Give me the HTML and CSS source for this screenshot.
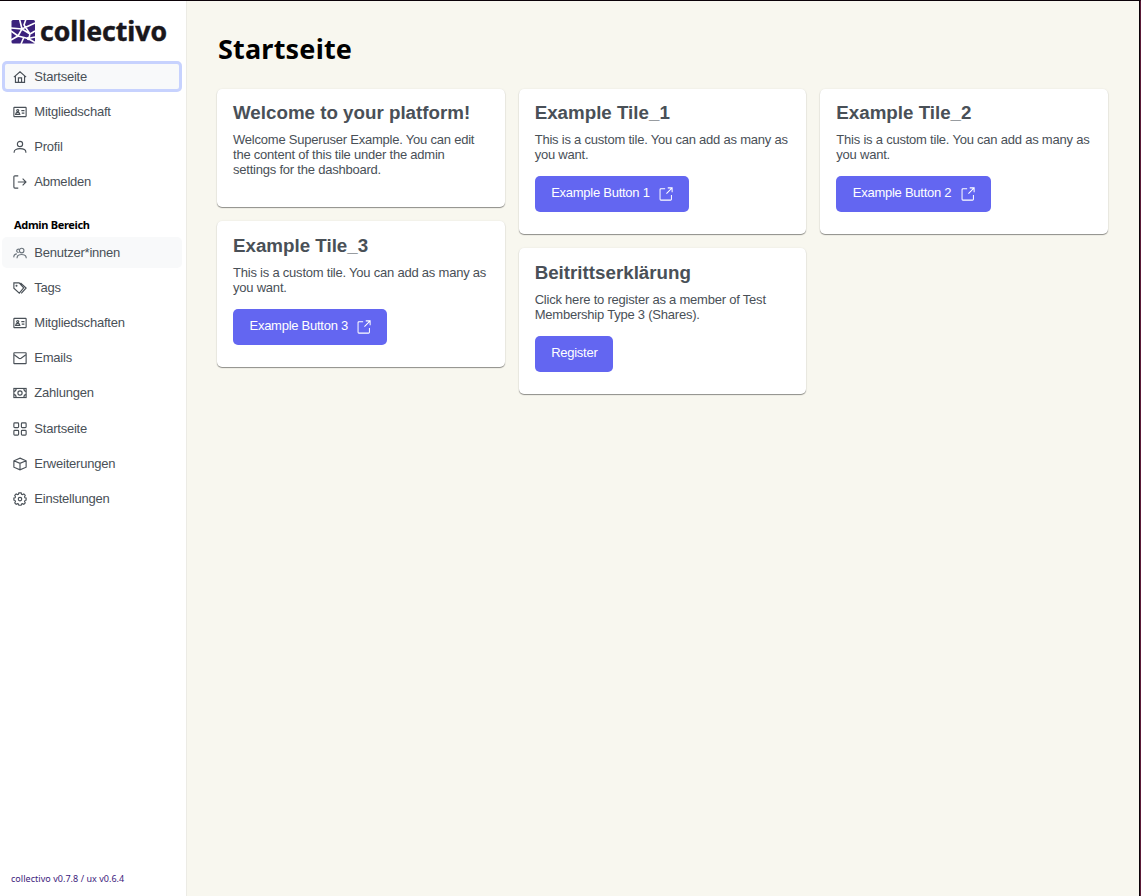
FILE: index.html
```html
<!DOCTYPE html>
<html lang="de">
<head>
<meta charset="utf-8">
<title>collectivo</title>
<link rel="stylesheet" href="styles.css">
</head>
<body>
<svg class="sprite" width="0" height="0">
  <symbol id="home" viewBox="0 0 16 16"><path d="M1 8.2 8 2l7 6.2M2.8 7v7.2h10.4V7M6.2 14V9h3.6v5"/></symbol>
  <symbol id="card" viewBox="0 0 16 16"><rect x="1" y="2.7" width="14" height="10.6" rx=".6"/><circle cx="5.4" cy="6.4" r="1.2"/><path d="M3 10.7c.3-3 4.5-3 4.8 0zM9.5 6.5h3.6M10 9.3h3"/></symbol>
  <symbol id="user" viewBox="0 0 16 16"><circle cx="8" cy="4.6" r="3"/><path d="M1.3 14.6v-.8c0-5.2 13.4-5.2 13.4 0v.8"/></symbol>
  <symbol id="logout" viewBox="0 0 16 16"><path d="M6 1H2.2Q1 1 1 2.2v11.6Q1 15 2.2 15H6M5.5 8h9.3M11 4.2 14.8 8 11 11.8"/></symbol>
  <symbol id="users" viewBox="0 0 16 16"><circle cx="9.9" cy="5.2" r="2.6"/><path d="M4.6 14c.2-5.8 10.2-5.8 10.6 0M6.5 7.4a1.9 1.9 0 1 1 .8-3.4M.8 13c.2-3 1.6-4 3.6-4"/></symbol>
  <symbol id="tags" viewBox="0 0 16 16"><path d="M1 2.2h6l5.2 5.6-5 6L1 8.2zM8.6 2.2 15 8l-5.6 6.2"/><circle cx="4" cy="5.3" r=".5"/></symbol>
  <symbol id="mail" viewBox="0 0 16 16"><rect x="1" y="2" width="14" height="12.4" rx=".5"/><path d="m1.3 4.3 5.5 4q1.2.8 2.4 0l5.5-4"/></symbol>
  <symbol id="cash" viewBox="0 0 16 16"><rect x="1" y="2.8" width="14" height="10.4"/><circle cx="8" cy="8" r="2.4"/><path d="M1 6.1c2 0 2.6-1.3 2.6-3.3M15 6.1c-2 0-2.6-1.3-2.6-3.3M1 9.9c2 0 2.6 1.3 2.6 3.3M15 9.9c-2 0-2.6 1.3-2.6 3.3"/></symbol>
  <symbol id="grid" viewBox="0 0 16 16"><rect x="1" y="1" width="5.4" height="5.4" rx="1"/><rect x="9.6" y="1" width="5.4" height="5.4" rx="1"/><rect x="1" y="9.6" width="5.4" height="5.4" rx="1"/><rect x="9.6" y="9.6" width="5.4" height="5.4" rx="1"/></symbol>
  <symbol id="cube" viewBox="0 0 16 16"><path d="m8 1.3 7 3v7.4l-7 3-7-3V4.3zM1 4.3l7 3 7-3M8 7.3v7.4"/></symbol>
  <symbol id="gear" viewBox="0 0 16 16"><path d="m6.7 1 2.6 0 .5 1.6 1 .4 1.6-.8 1.6 1.7-.8 1.6.4 1 1.4.4v2.4l-1.4.5-.4 1 .8 1.6-1.6 1.7-1.6-.8-1 .4-.5 1.4H6.7l-.5-1.4-1-.4-1.6.8L2 12.4l.8-1.6-.4-1L1 9.3V6.9l1.4-.4.4-1L2 3.9l1.6-1.7 1.6.8 1-.4z"/><circle cx="8" cy="8.1" r="2"/></symbol>
  <symbol id="external" viewBox="0 0 16 16"><path d="M7 2H2.2Q1.2 2 1.2 3v11q0 1 1 1h11q1 0 1-1V9M10 1h5v5M15 1 8.5 7.5"/></symbol>
</svg>
<div class="app">
  <aside class="sidebar">
    <svg class="logo" width="158" height="44" viewBox="0 -10 158 44">
      <rect x=".5" y="1" width="23.5" height="23.5" rx="1.5" fill="#3b217c"/>
      <path d="M0 9 11 10 24 4M8.5 0 11 10 7 17 0 12M11 10l8 5 5-3M15 0l-2 6 6 9-1 4M7 17l10 2.5 7 4M7 17l-7 4M13 18l-3 7M24 18l-7 1.5" fill="none" stroke="#fff" stroke-width="1.6"/>
      <circle cx="17.5" cy="19.5" r="1.8" fill="#fff"/>
      <circle cx="11" cy="10" r="1.4" fill="#fff"/>
      <text class="logo-text" x="29" y="21.8" textLength="127" lengthAdjust="spacingAndGlyphs">collectivo</text>
    </svg>
    <nav class="menu">
      <a class="item focused"><svg><use href="#home"/></svg><span>Startseite</span></a>
      <a class="item"><svg><use href="#card"/></svg><span>Mitgliedschaft</span></a>
      <a class="item"><svg><use href="#user"/></svg><span>Profil</span></a>
      <a class="item"><svg><use href="#logout"/></svg><span>Abmelden</span></a>
    </nav>
    <div class="section">Admin Bereich</div>
    <nav class="menu">
      <a class="item hovered"><svg class="light"><use href="#users"/></svg><span>Benutzer*innen</span></a>
      <a class="item"><svg><use href="#tags"/></svg><span>Tags</span></a>
      <a class="item"><svg><use href="#card"/></svg><span>Mitgliedschaften</span></a>
      <a class="item"><svg><use href="#mail"/></svg><span>Emails</span></a>
      <a class="item"><svg><use href="#cash"/></svg><span>Zahlungen</span></a>
      <a class="item"><svg><use href="#grid"/></svg><span>Startseite</span></a>
      <a class="item"><svg><use href="#cube"/></svg><span>Erweiterungen</span></a>
      <a class="item"><svg><use href="#gear"/></svg><span>Einstellungen</span></a>
    </nav>
    <div class="version">collectivo v0.7.8 / ux v0.6.4</div>
  </aside>
  <main class="content">
    <h1>Startseite</h1>
    <div class="tiles">
      <div class="column">
        <section class="tile short"><h2>Welcome to your platform!</h2><p>Welcome Superuser Example. You can edit the content of this tile under the admin settings for the dashboard.</p></section>
        <section class="tile"><h2>Example Tile_3</h2><p>This is a custom tile. You can add as many as you want.</p><a class="button">Example Button 3<svg><use href="#external"/></svg></a></section>
      </div>
      <div class="column">
        <section class="tile"><h2>Example Tile_1</h2><p>This is a custom tile. You can add as many as you want.</p><a class="button">Example Button 1<svg><use href="#external"/></svg></a></section>
        <section class="tile"><h2>Beitrittserklärung</h2><p>Click here to register as a member of Test Membership Type 3 (Shares).</p><a class="button">Register</a></section>
      </div>
      <div class="column">
        <section class="tile"><h2>Example Tile_2</h2><p>This is a custom tile. You can add as many as you want.</p><a class="button">Example Button 2<svg><use href="#external"/></svg></a></section>
      </div>
    </div>
  </main>
</div>
</body>
</html>
```
FILE: styles.css
```css
* { box-sizing: border-box; }
body { margin: 0; font-family: "Liberation Sans", Arial, sans-serif; font-size: 13px; letter-spacing: -.22px; color: #495057; }
.sprite { display: block; }
.app { display: flex; height: 896px; border-top: 1px solid #0b0208; border-right: 1px solid #5c1b38; box-shadow: inset -1px 0 #0b0208; background: #f8f7ef; }
svg { fill: none; stroke: currentColor; stroke-width: 1.3; }
.sidebar { width: 187px; flex: none; display: flex; flex-direction: column; background: #fff; border-right: 1px solid #ecebe5; padding: 8px 4px 0 2px; }
.logo { display: block; margin-left: 9px; flex: none; stroke: none; }
.logo-text { font: bold 27px "Noto Sans", sans-serif; letter-spacing: 0; fill: #1a171b; stroke: #1a171b; stroke-width: .5; }
.menu { display: flex; flex-direction: column; gap: 4.13px; }
.logo + .menu { margin-top: 8px; }
.item { display: flex; align-items: center; height: 31px; padding: 0 11px; border-radius: 5px; line-height: 15px; }
.item svg { width: 14px; height: 14px; margin-right: 7.3px; flex: none; }
.item span { margin-bottom: 1px; }
.focused { background: #f8f9fa; box-shadow: inset 0 0 0 3px #c7d2fe; }
.hovered { background: #f8f9fa; }
.light { color: #6c757d; }
.section { margin: 20px 0 5px 12px; font: bold 11px/15px "Noto Sans", sans-serif; color: #000; letter-spacing: -.32px; }
.version { margin: auto 0 10px 9px; font: 9px/14px "Noto Sans", sans-serif; letter-spacing: .04px; color: #3b217c; }
.content { flex: 1; padding: 30px 32px 0 30px; }
h1 { margin: 0; height: 57.6px; padding-left: 1px; font: bold 27px/36px "Noto Sans", sans-serif; letter-spacing: .2px; color: #000; }
.tiles { display: grid; grid-template-columns: repeat(3, 1fr); gap: 14px; align-items: start; }
.column { display: flex; flex-direction: column; gap: 14.1px; }
.tile { height: 145.6px; padding: 12.9px 15px 0 16px; border-radius: 5px; background: #fff; box-shadow: 0 1px 1px rgba(0,0,0,.42), 0 0 2px rgba(0,0,0,.08); }
.short { height: 118.4px; }
h2 { margin: 0 0 7.9px; font-size: 18.75px; line-height: 23px; font-weight: bold; letter-spacing: 0; white-space: nowrap; }
p { margin: 0 0 13.9px; line-height: 15px; }
.button { display: inline-flex; height: 36px; padding: 0 16px 0 16.5px; border-radius: 5px; background: #6366f1; color: #fff; line-height: 34px; letter-spacing: -.26px; }
.button svg { width: 14px; height: 14px; margin: 11px 0 0 9.3px; stroke-width: 1.15; }
```
